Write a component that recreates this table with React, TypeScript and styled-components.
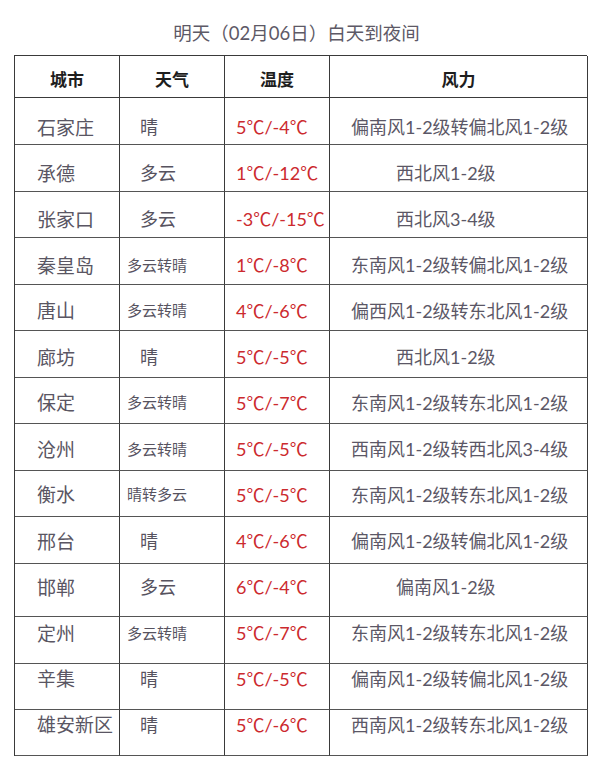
import React from 'react';
import styled, { createGlobalStyle } from 'styled-components';

const GlobalStyle = createGlobalStyle`
    html, body {
        margin: 0;
        padding: 0;
        background: #ffffff;
    }
    body {
        font-family: "Lato", "Noto Sans CJK SC", sans-serif;
    }
`;

const Page = styled.div`
    width: 600px;
    padding: 0 13px 0 14px;
    box-sizing: border-box;
`;

const Title = styled.div`
    height: 55px;
    display: flex;
    align-items: center;
    justify-content: center;
    padding: 9px 8px 0 0;
    box-sizing: border-box;
    font-size: 18.5px;
    color: #5d5966;
`;

const Table = styled.div`
    display: grid;
    grid-template-columns: 105px 105px 105px 258px;
    border-top: 1px solid #3a3a3a;
    border-left: 1px solid #3a3a3a;
`;

const Cell = styled.div<{ $h: number; $shift: number; $pad: number }>`
    height: ${p => p.$h}px;
    box-sizing: border-box;
    display: flex;
    align-items: center;
    padding-left: ${p => p.$pad}px;
    padding-top: ${p => Math.max(0, p.$shift * 2)}px;
    padding-bottom: ${p => Math.max(0, -p.$shift * 2)}px;
    border-right: 1px solid #3a3a3a;
    border-bottom: 1px solid #555;
    white-space: nowrap;
`;

const HeadCell = styled.div`
    height: 42px;
    box-sizing: border-box;
    display: flex;
    align-items: center;
    justify-content: center;
    padding-top: 4px;
    border-right: 1px solid #3a3a3a;
    border-bottom: 1px solid #3a3a3a;
    font-size: 17px;
    font-weight: 700;
    color: #1e1e1e;
`;

const City = styled.span`
    font-size: 19px;
    color: #5a5663;
`;

const Weather = styled.span<{ $small: boolean }>`
    font-size: ${p => (p.$small ? 15 : 18)}px;
    color: #57535f;
`;

const Temp = styled.span`
    font-size: 18px;
    color: #cc2a2e;
`;

const Wind = styled.span`
    font-size: 18px;
    color: #5b5766;
`;

interface Row {
    city: string;
    weather: string;
    temp: string;
    wind: string;
    h: number;
    shift: number;
}

const rows: Row[] = [
    { city: '石家庄', weather: '晴', temp: '5℃/-4℃', wind: '偏南风1-2级转偏北风1-2级', h: 47, shift: 5 },
    { city: '承德', weather: '多云', temp: '1℃/-12℃', wind: '西北风1-2级', h: 47, shift: 4 },
    { city: '张家口', weather: '多云', temp: '-3℃/-15℃', wind: '西北风3-4级', h: 46, shift: 3.5 },
    { city: '秦皇岛', weather: '多云转晴', temp: '1℃/-8℃', wind: '东南风1-2级转偏北风1-2级', h: 47, shift: 3 },
    { city: '唐山', weather: '多云转晴', temp: '4℃/-6℃', wind: '偏西风1-2级转东北风1-2级', h: 46, shift: 2 },
    { city: '廊坊', weather: '晴', temp: '5℃/-5℃', wind: '西北风1-2级', h: 47, shift: 2 },
    { city: '保定', weather: '多云转晴', temp: '5℃/-7℃', wind: '东南风1-2级转东北风1-2级', h: 46, shift: 1 },
    { city: '沧州', weather: '多云转晴', temp: '5℃/-5℃', wind: '西南风1-2级转西北风3-4级', h: 47, shift: 1 },
    { city: '衡水', weather: '晴转多云', temp: '5℃/-5℃', wind: '东南风1-2级转东北风1-2级', h: 46, shift: 0 },
    { city: '邢台', weather: '晴', temp: '4℃/-6℃', wind: '偏南风1-2级转偏北风1-2级', h: 47, shift: 0 },
    { city: '邯郸', weather: '多云', temp: '6℃/-4℃', wind: '偏南风1-2级', h: 53, shift: -4 },
    { city: '定州', weather: '多云转晴', temp: '5℃/-7℃', wind: '东南风1-2级转东北风1-2级', h: 47, shift: -8 },
    { city: '辛集', weather: '晴', temp: '5℃/-5℃', wind: '偏南风1-2级转偏北风1-2级', h: 46, shift: -9 },
    { city: '雄安新区', weather: '晴', temp: '5℃/-6℃', wind: '西南风1-2级转东北风1-2级', h: 46, shift: -9 },
];

const headers = ['城市', '天气', '温度', '风力'];

const App: React.FC = () => {
    return (
        <Page>
            <GlobalStyle />
            <Title>明天（02月06日）白天到夜间</Title>
            <Table>
                {headers.map(h => (
                    <HeadCell key={h}>{h}</HeadCell>
                ))}
                {rows.map(r => {
                    const smallWeather = r.weather.length > 2;
                    const longWind = r.wind.length > 8;
                    return (
                        <React.Fragment key={r.city}>
                            <Cell $h={r.h} $shift={r.shift} $pad={22}>
                                <City>{r.city}</City>
                            </Cell>
                            <Cell $h={r.h} $shift={r.shift} $pad={smallWeather ? 7 : 20}>
                                <Weather $small={smallWeather}>{r.weather}</Weather>
                            </Cell>
                            <Cell $h={r.h} $shift={r.shift} $pad={11}>
                                <Temp>{r.temp}</Temp>
                            </Cell>
                            <Cell $h={r.h} $shift={r.shift} $pad={longWind ? 21 : 66}>
                                <Wind>{r.wind}</Wind>
                            </Cell>
                        </React.Fragment>
                    );
                })}
            </Table>
        </Page>
    );
};

export default App;
